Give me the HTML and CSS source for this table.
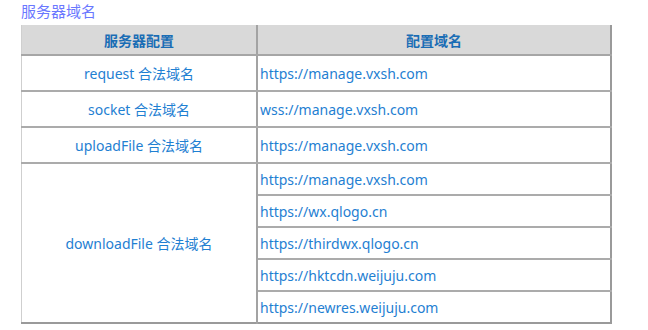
FILE: index.html
```html
<!DOCTYPE html>
<html>
<head>
<meta charset="utf-8">
<link rel="stylesheet" href="styles.css">
</head>
<body>
<div class="page">
  <div class="title">服务器域名</div>
  <table class="domains">
    <thead>
      <tr><th class="c1">服务器配置</th><th class="c2">配置域名</th></tr>
    </thead>
    <tbody>
      <tr class="big"><td class="c1">request 合法域名</td><td class="c2">https://manage.vxsh.com</td></tr>
      <tr class="big"><td class="c1">socket 合法域名</td><td class="c2">wss://manage.vxsh.com</td></tr>
      <tr class="big"><td class="c1">uploadFile 合法域名</td><td class="c2">https://manage.vxsh.com</td></tr>
      <tr class="small"><td class="c1" rowspan="5">downloadFile 合法域名</td><td class="c2">https://manage.vxsh.com</td></tr>
      <tr class="small"><td class="c2">https://wx.qlogo.cn</td></tr>
      <tr class="small"><td class="c2">https://thirdwx.qlogo.cn</td></tr>
      <tr class="small"><td class="c2">https://hktcdn.weijuju.com</td></tr>
      <tr class="small last"><td class="c2">https://newres.weijuju.com</td></tr>
    </tbody>
  </table>
</div>
</body>
</html>
```

FILE: styles.css
```css
html, body {
  margin: 0;
  padding: 0;
  background: #ffffff;
}
.page {
  padding: 1px 0 0 21px;
  font-family: "Noto Sans", "Noto Sans CJK SC", sans-serif;
}
.title {
  font-size: 15px;
  line-height: 21px;
  height: 24px;
  color: #6a78ff;
}
.domains {
  width: 591px;
  border-collapse: collapse;
  table-layout: fixed;
  font-size: 14px;
  color: #1f80d2;
  border-left: 1px solid #cfcfcf;
  border-right: 2px solid #9a9a9a;
  border-bottom: 2px solid #9a9a9a;
}
.domains th {
  background: #d9d9d9;
  color: #1a6db5;
  font-weight: bold;
  height: 29px;
  padding: 0;
  text-align: center;
  border-bottom: 2px solid #a6a6a6;
  font-family: "Noto Sans CJK SC", sans-serif;
}
.domains .c1 {
  width: 234px;
  text-align: center;
  border-right: 2px solid #a3a3a3;
}
.domains td {
  padding: 0;
  vertical-align: middle;
}
.domains td.c2 {
  text-align: left;
  padding-left: 2px;
  border-bottom: 2px solid #ababab;
}
.domains tr.big td {
  height: 34px;
  border-bottom: 2px solid #ababab;
}
.domains tr.small td.c2 {
  height: 30px;
}
.domains tr.last td.c2 {
  border-bottom: none;
}
```
